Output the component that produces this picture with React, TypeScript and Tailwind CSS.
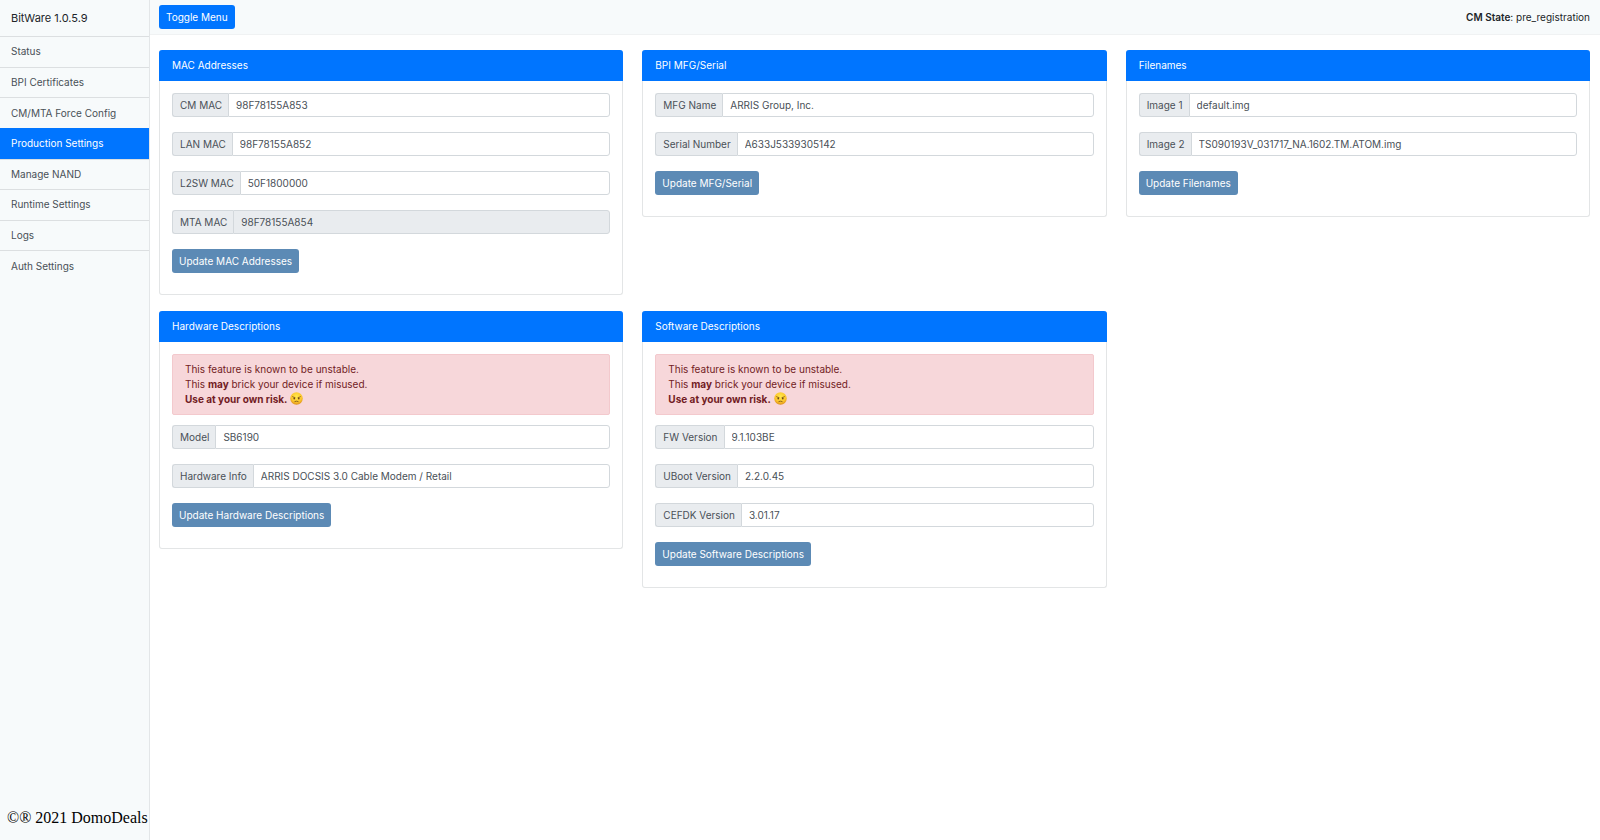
import type { ReactNode } from "react";

type FieldData = { id: string; label: string; value: string; disabled?: boolean };

const menu = [
  "Status",
  "BPI Certificates",
  "CM/MTA Force Config",
  "Production Settings",
  "Manage NAND",
  "Runtime Settings",
  "Logs",
  "Auth Settings",
];

function AngryFace() {
  return (
    <svg viewBox="0 0 24 24" className="inline-block size-[13px] align-text-bottom" role="img" aria-label="angry face">
      <defs>
        <radialGradient id="face" cx="50%" cy="35%" r="65%">
          <stop offset="0%" stopColor="#ffe94f" />
          <stop offset="65%" stopColor="#fcc62c" />
          <stop offset="100%" stopColor="#dd8f1c" />
        </radialGradient>
      </defs>
      <circle cx="12" cy="12" r="11.5" fill="url(#face)" />
      <ellipse cx="7.8" cy="11.8" rx="1.5" ry="1.9" fill="#6b4416" />
      <ellipse cx="16.2" cy="11.8" rx="1.5" ry="1.9" fill="#6b4416" />
      <path d="M4.5 8.5 9.5 10.5M19.5 8.5 14.5 10.5" stroke="#7d531b" strokeWidth="1.2" strokeLinecap="round" />
      <path d="M9 17.5q3-1.4 6 0" fill="none" stroke="#6b4416" strokeWidth="1.4" strokeLinecap="round" />
    </svg>
  );
}

function Warning() {
  return (
    <div role="alert" className="mb-2.5 h-[61px] rounded-xs border border-[#f3c9cd] bg-[#f7d7da] px-3 py-[7px] leading-[15px] text-[#721c24]">
      This feature is known to be unstable.
      <br />
      This <strong>may</strong> brick your device if misused.
      <br />
      <strong>Use at your own risk.</strong> <AngryFace />
    </div>
  );
}

function Field({ id, label, value, disabled }: FieldData) {
  return (
    <div className="flex h-6 w-full">
      <label htmlFor={id} className="flex items-center rounded-l-[3px] border border-r-0 border-[#d3d8dc] bg-[#e9ecef] pr-1.5 pl-[7px] whitespace-nowrap text-[#495057]">
        {label}
      </label>
      <input
        id={id}
        type="text"
        defaultValue={value}
        disabled={disabled}
        className="min-w-0 flex-1 rounded-r-[3px] border border-[#d3d8dc] bg-white px-[7px] text-[#495057] disabled:bg-[#e9ecef]"
      />
    </div>
  );
}

function Card({ title, fields, action, children }: { title: string; fields: FieldData[]; action: string; children?: ReactNode }) {
  return (
    <section className="rounded-[3px] border border-t-0 border-[#e3e5e6] bg-white">
      <h2 className="-mx-px flex h-[31px] items-center rounded-t-[3px] bg-[#0075ff] px-[13px] text-white">{title}</h2>
      <form className="px-3 pt-3 pb-[21px]">
        {children}
        <div className="flex flex-col items-start gap-[15px]">
          {fields.map((f) => (
            <Field key={f.id} {...f} />
          ))}
          <button type="button" className="h-6 rounded-[3px] bg-[#5c8ab5] px-[7px] text-white">
            {action}
          </button>
        </div>
      </form>
    </section>
  );
}

export default function App() {
  return (
    <div className="flex min-h-screen bg-white font-[Inter,sans-serif] text-[10px] text-[#212529]">
      <aside className="flex w-[150px] shrink-0 flex-col border-r border-[#e3e6e8] bg-[#f7fafb]">
        <h1 className="flex h-9 items-center px-[11px] text-[11px]">BitWare 1.0.5.9</h1>
        <nav className="grid h-[245px] auto-rows-fr">
          {menu.map((item) => (
            <a
              key={item}
              href="#"
              className={
                item === "Production Settings"
                  ? "flex items-center border-t border-[#0075ff] bg-[#0075ff] px-[11px] text-white"
                  : "flex items-center border-t border-[#dcdfe1] px-[11px] text-[#495057]"
              }
            >
              {item}
            </a>
          ))}
        </nav>
        <footer className="mt-auto mb-3 pl-[7px] font-['Liberation_Serif',serif] text-base leading-5 whitespace-nowrap text-black">
          ©® 2021 DomoDeals
        </footer>
      </aside>

      <div className="min-w-0 flex-1">
        <header className="flex h-[35px] items-center justify-between border-b border-[#f0f2f3] bg-[#f7fafb] pr-2.5 pl-[9px]">
          <button type="button" className="h-6 rounded-[3px] bg-[#0075ff] px-[7px] text-white">
            Toggle Menu
          </button>
          <p>
            <strong className="font-semibold">CM State</strong>: pre_registration
          </p>
        </header>

        <main className="grid grid-cols-3 items-start gap-x-[19px] gap-y-4 pt-[15px] pr-2.5 pl-[9px]">
          <Card
            title="MAC Addresses"
            action="Update MAC Addresses"
            fields={[
              { id: "cm-mac", label: "CM MAC", value: "98F78155A853" },
              { id: "lan-mac", label: "LAN MAC", value: "98F78155A852" },
              { id: "l2sw-mac", label: "L2SW MAC", value: "50F1800000" },
              { id: "mta-mac", label: "MTA MAC", value: "98F78155A854", disabled: true },
            ]}
          />
          <Card
            title="BPI MFG/Serial"
            action="Update MFG/Serial"
            fields={[
              { id: "mfg-name", label: "MFG Name", value: "ARRIS Group, Inc." },
              { id: "serial", label: "Serial Number", value: "A633J5339305142" },
            ]}
          />
          <Card
            title="Filenames"
            action="Update Filenames"
            fields={[
              { id: "image-1", label: "Image 1", value: "default.img" },
              { id: "image-2", label: "Image 2", value: "TS090193V_031717_NA.1602.TM.ATOM.img" },
            ]}
          />
          <Card
            title="Hardware Descriptions"
            action="Update Hardware Descriptions"
            fields={[
              { id: "model", label: "Model", value: "SB6190" },
              { id: "hw-info", label: "Hardware Info", value: "ARRIS DOCSIS 3.0 Cable Modem / Retail" },
            ]}
          >
            <Warning />
          </Card>
          <Card
            title="Software Descriptions"
            action="Update Software Descriptions"
            fields={[
              { id: "fw", label: "FW Version", value: "9.1.103BE" },
              { id: "uboot", label: "UBoot Version", value: "2.2.0.45" },
              { id: "cefdk", label: "CEFDK Version", value: "3.01.17" },
            ]}
          >
            <Warning />
          </Card>
        </main>
      </div>
    </div>
  );
}
